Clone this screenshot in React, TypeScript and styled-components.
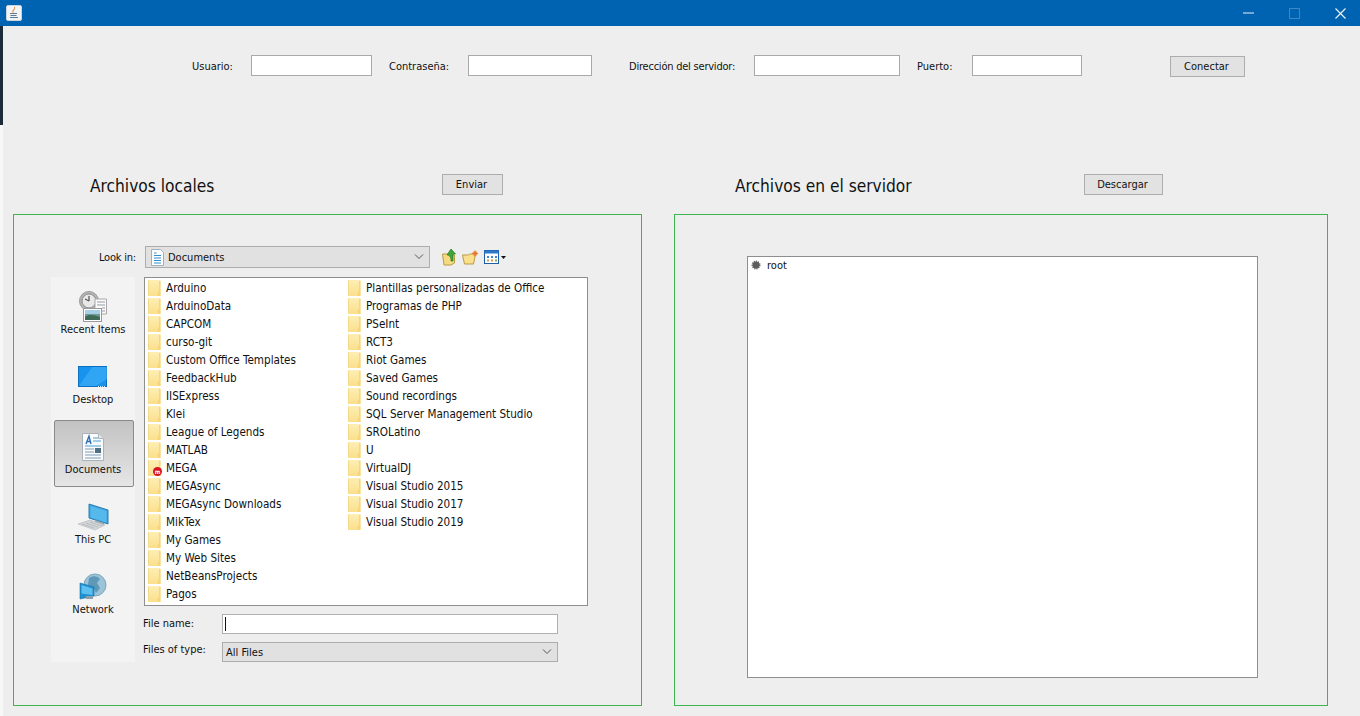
import React from "react";
import styled, { createGlobalStyle } from "styled-components";

const Global = createGlobalStyle`
  html, body { margin: 0; padding: 0; background: #eeeeee; }
  body { font-family: "DejaVu Sans", "Noto Sans", sans-serif; font-stretch: condensed; font-size: 11px; color: #111; overflow: hidden; }
  * { box-sizing: border-box; }
`;

const Window = styled.div`
  width: 1360px; height: 716px; display: flex; flex-direction: column; background: #eeeeee; overflow: hidden; position: relative;
`;
const TitleBar = styled.div`
  height: 26px; background: #0063b1; display: flex; align-items: center; padding-left: 6px; flex: none;
`;
const WindowButtons = styled.div`
  margin-left: auto; margin-right: -3px; display: flex; align-items: center;
`;
const WinBtn = styled.div`
  width: 46px; height: 26px; display: flex; align-items: center; justify-content: center;
`;
const EdgeStrip = styled.div`
  position: absolute; left: 0; top: 26px; width: 3px; height: 99px; background: #1c2a3a;
`;
const EdgeLight = styled.div`
  position: absolute; left: 0; top: 125px; width: 3px; height: 591px; background: #f7f7f7;
`;
const ConnectRow = styled.div`
  height: 148px; flex: none; display: flex; align-items: flex-start; padding: 29px 0 0 192px;
`;
const Label = styled.label<{ $w: number; $ls?: number }>`
  width: ${p => p.$w}px; flex: none; height: 21px; line-height: 23px; font-size: 11px; white-space: nowrap; letter-spacing: ${p => p.$ls ?? 0}px;
`;
const TextBox = styled.div<{ $w: number; $mr: number }>`
  width: ${p => p.$w}px; margin-right: ${p => p.$mr}px; height: 21px; flex: none; background: #fff; border: 1px solid #a9a9a9;
`;
const Btn = styled.button<{ $w: number }>`
  width: ${p => p.$w}px; height: 21px; flex: none; padding: 0 2px 1px 0; background: #e2e2e2; border: 1px solid #adadad; font: inherit; font-size: 11px; color: #111;
`;
const ConnectBtn = styled(Btn)`
  margin: 1px 0 0 0;
`;
const Heads = styled.div`
  height: 40px; flex: none; display: flex; align-items: flex-start;
`;
const Head = styled.div<{ $w: number; $pl: number }>`
  width: ${p => p.$w}px; padding-left: ${p => p.$pl}px; flex: none; display: flex; align-items: flex-start;
`;
const HeadTitle = styled.h2<{ $w: number }>`
  margin: 0; width: ${p => p.$w}px; font-weight: 400; font-size: 17.2px; line-height: 25px; color: #111; white-space: nowrap; flex: none;
`;
const Panels = styled.div`
  display: flex; padding-left: 13px; gap: 32px; flex: none;
`;
const Panel = styled.div<{ $w: number }>`
  width: ${p => p.$w}px; height: 492px; border: 1px solid #3fb54f; flex: none;
`;
const LeftPanel = styled(Panel)`
  padding: 31px 0 0 37px;
`;
const RightPanel = styled(Panel)`
  padding: 41px 0 0 72px;
`;
const LookRow = styled.div`
  display: flex; height: 22px; align-items: center;
`;
const LookLabel = styled.span`
  width: 94px; padding: 0 9px 0 0; text-align: right; font-size: 11px; letter-spacing: -.2px; white-space: nowrap; flex: none;
`;
const Combo = styled.div<{ $w: number }>`
  width: ${p => p.$w}px; height: 22px; flex: none; background: #e1e1e1; border: 1px solid #adadad; display: flex; align-items: center; padding: 0 5px 0 5px; font-size: 11px; gap: 4px;
`;
const ComboText = styled.span`
  flex: 1; white-space: nowrap; padding-top: 1px;
`;
const Tools = styled.div`
  display: flex; align-items: center; margin-left: 12px; gap: 5px;
`;
const Body = styled.div`
  display: flex; margin-top: 9px;
`;
const Sidebar = styled.div`
  width: 84px; height: 385px; flex: none; background: #f3f3f3; padding: 2px 0 0 3px; margin-right: 8px;
`;
const Place = styled.div<{ $sel?: boolean }>`
  width: 80px; height: 70px; position: relative; display: flex; flex-direction: column; align-items: center; justify-content: flex-end; padding: 0 2px 12px 0; font-size: 11px;
  ${p => p.$sel && `
    &::before { content: ""; position: absolute; left: 0; right: 0; top: 1px; bottom: 2px; border: 1px solid #8a8a8a; border-radius: 2px; background: linear-gradient(#c2c2c2, #e6e6e6); }
  `}
`;
const PlaceIcon = styled.div`
  position: relative; height: 34px; display: flex; align-items: center; justify-content: center; margin-bottom: -1px;
`;
const PlaceLabel = styled.span`
  position: relative; line-height: 14px; white-space: nowrap;
`;
const Main = styled.div`
  width: 445px; flex: none;
`;
const FileList = styled.div`
  width: 444px; height: 329px; margin-left: 1px; background: #fff; border: 1px solid #8e8e8e; padding: 1px 0 0 3px;
  display: grid; grid-template-columns: 200px 1fr; grid-template-rows: repeat(18, 18px); grid-auto-flow: column;
`;
const FileRow = styled.div`
  display: flex; align-items: center; height: 18px; font-size: 11.6px; white-space: nowrap; color: #111; gap: 5px;
`;
const FolderWrap = styled.span`
  position: relative; width: 13px; height: 18px; flex: none; display: block;
`;
const MegaBadge = styled.span`
  position: absolute; left: 5px; bottom: 1px; width: 9px; height: 9px; border-radius: 50%; background: #d9131f; color: #fff; font-size: 6px; line-height: 9px; text-align: center; font-weight: 700;
`;
const FormRow = styled.div<{ $mt: number }>`
  display: flex; align-items: flex-start; margin-top: ${p => p.$mt}px;
`;
const FormLabel = styled.span<{ $dy: number }>`
  width: 79px; flex: none; font-size: 11px; line-height: 14px; margin-top: ${p => p.$dy}px; white-space: nowrap;
`;
const NameInput = styled.div`
  width: 336px; height: 20px; background: #fff; border: 1px solid #b0b0b0; padding: 2px 0 0 2px;
`;
const Caret = styled.div`
  width: 1px; height: 14px; background: #111;
`;
const TypeCombo = styled(Combo)`
  width: 336px; height: 20px; padding-left: 3px;
`;
const Tree = styled.div`
  width: 511px; height: 422px; background: #fff; border: 1px solid #8e8e8e; padding: 0 0 0 3px; display: flex; align-items: flex-start;
`;
const TreeRow = styled.div`
  display: flex; align-items: center; height: 16px; gap: 6px; font-size: 11px;
`;

const Chevron = () => (
  <svg width="10" height="6" viewBox="0 0 10 6"><path d="M1 .5 5 4.500 9 .5" fill="none" stroke="#555" /></svg>
);
const Folder = () => (
  <svg width="13" height="18" viewBox="0 0 13 18" style={{ display: "block" }}>
    <defs>
      <linearGradient id="fg" x1="0" y1="0" x2="0" y2="1">
        <stop offset="0" stopColor="#fdeeb4" />
        <stop offset="1" stopColor="#fbe08c" />
      </linearGradient>
    </defs>
    <path d="M0 1h12.500v16H0z" fill="url(#fg)" />
    <path d="M.5 1.500v15" stroke="#f3d98c" />
    <path d="M11 2h1.500v15H9.500v-3.500L11 12z" fill="#f6d67a" />
  </svg>
);
const DocIcon = ({ big }: { big?: boolean }) => (
  big ? (
    <svg width="24" height="28" viewBox="0 0 24 28">
      <path d="M1.500.5h16l5 5v22h-21z" fill="#fbfbfb" stroke="#a9b2ba" />
      <path d="M17.500.5v5h5" fill="#e5e9ec" stroke="#a9b2ba" />
      <path d="M5 11 8 3l2 8M6 8.500h3.500" fill="none" stroke="#2c6fb6" strokeWidth="1.400" />
      <path d="M12 5h5M12 8h8M4 13h16" stroke="#48a0d8" />
      <path d="M4 16h9M4 19h9M4 22h16M4 25h16" stroke="#7d9cb8" />
      <rect x="14" y="15" width="6" height="5" fill="#4f6f84" />
    </svg>
  ) : (
    <svg width="13" height="17" viewBox="0 0 13 17">
      <path d="M.5.5h9l3 3v13H.5z" fill="#fff" stroke="#9fb0be" />
      <path d="M3 4h2.500M3 6.500h7M3 9h7M3 11.500h7M3 14h7" stroke="#2f8fd0" />
    </svg>
  )
);
const ClockIcon = () => (
  <svg width="30" height="32" viewBox="0 0 30 32">
    <circle cx="11" cy="10" r="9.500" fill="#b5b5b5" stroke="#9a9a9a" />
    <circle cx="11" cy="10" r="7" fill="#e8e8e8" stroke="#8a8a8a" />
    <path d="M11 5v5l-4-2" fill="none" stroke="#333" />
    <path d="M17 8h11.500v15H17z" fill="#fafafa" stroke="#a8a8a8" />
    <path d="M19 11h8M19 14h8M24 17h3M24 20h3" stroke="#99a" />
    <rect x="5.500" y="17.500" width="18" height="13" fill="#fff" stroke="#9a9a9a" />
    <rect x="7" y="19" width="15" height="10" fill="#6f9a92" />
    <rect x="7" y="19" width="15" height="4" fill="#a5d0e6" />
    <path d="M7 26c4-3 9-2 15 0v3H7z" fill="#3f6a55" />
  </svg>
);
const DesktopIcon = () => (
  <svg width="30" height="22" viewBox="0 0 30 22">
    <rect x=".5" y=".5" width="28" height="20" fill="#1793ee" stroke="#0e6fc0" />
    <path d="M1 20 14 1h15v12L18 20z" fill="#3fb0f7" opacity=".6" />
    <path d="M20 20.500h8" stroke="#cfe8fa" strokeDasharray="1 1" />
  </svg>
);
const PcIcon = () => (
  <svg width="32" height="28" viewBox="0 0 32 28">
    <path d="M12 1l19 6v14l-19-6z" fill="#3ba2df" stroke="#2d7fb4" />
    <path d="M13.500 3l16 5v11.500l-16-5z" fill="#56b9ec" />
    <path d="M18 17l9 3v3l-9-3z" fill="#9aa5ad" />
    <path d="M1 21 13 17l15 5-10 5z" fill="#d3d6d8" stroke="#b3b7ba" strokeWidth=".6" />
    <path d="M5 21l12 4M9 20l12 4M13 19l12 4" stroke="#a9adb0" strokeWidth=".6" />
  </svg>
);
const NetIcon = () => (
  <svg width="28" height="28" viewBox="0 0 28 28">
    <circle cx="16" cy="12" r="11" fill="#9cc4d8" stroke="#7aa6be" />
    <path d="M10 5c4-3 9-2 11 1l-3 4 3 5-4 5-3-6-5-2z" fill="#6098b8" />
    <path d="M1 11l14 4v9L1 27z" fill="#1e8fd0" stroke="#1672a8" strokeWidth=".6" transform="translate(0 -1)" />
    <path d="M2.500 12l11 3.500v6.500l-11-1.500z" fill="#5cc0ef" />
    <path d="M7 23h7v3H7z" fill="#8ea0aa" />
  </svg>
);
const UpIcon = () => (
  <svg width="15" height="18" viewBox="0 0 15 18">
    <path d="M.5 6h6l1 1h5v8L9 17H2z" fill="#f6da82" stroke="#b99b44" />
    <path d="M9 1 13.500 6H11v7H9c0-4-1-5-3-6l-1 0z" fill="#3fa73a" stroke="#23761f" strokeWidth=".7" />
  </svg>
);
const NewFolderIcon = () => (
  <svg width="17" height="15" viewBox="0 0 17 15">
    <path d="M.5 5h6l1-1h6l-2 10H2.500z" fill="#f8e08e" stroke="#b99b44" />
    <circle cx="13" cy="3.500" r="2.500" fill="#f29a4a" />
    <path d="M13 .5v6M10 3.500h6" stroke="#d9602a" strokeWidth=".7" />
  </svg>
);
const ViewIcon = () => (
  <svg width="22" height="14" viewBox="0 0 22 14">
    <rect x=".5" y=".5" width="14" height="13" fill="#fff" stroke="#1e5fa8" />
    <rect x=".5" y=".5" width="14" height="3" fill="#2b79c9" />
    <path d="M3 6h2v2H3zM7 6h2v2H7zM11 6h2v2h-2z" fill="#3c8ad0" />
    <path d="M3 9.500h2v2H3zM7 9.500h2v2H7z" fill="#d59a4a" />
    <path d="M11 9.500h2v2h-2z" fill="#7aa660" />
    <path d="M17 6h5l-2.500 3z" fill="#111" />
  </svg>
);
const JavaIcon = () => (
  <svg width="16" height="16" viewBox="0 0 16 16">
    <rect x=".5" y=".5" width="15" height="15" rx="1.500" fill="#f2f4f6" stroke="#c9d4de" />
    <path d="M8.500 2c1 2-2.500 3-1.500 5.500C6 5 9.500 4.500 8.500 2z" fill="#e07b22" stroke="#e07b22" strokeWidth=".6" />
    <path d="M4 8.500h7M4.500 10.500h6M4 12.500h8" stroke="#5f7a92" />
  </svg>
);
const RootBullet = () => (
  <svg width="10" height="10" viewBox="0 0 10 10">
    <circle cx="5" cy="5" r="3.500" fill="#5e5e5e" stroke="#5e5e5e" strokeDasharray="1 1" strokeWidth="2" />
  </svg>
);

const col1 = ["Arduino","ArduinoData","CAPCOM","curso-git","Custom Office Templates","FeedbackHub","IISExpress","Klei","League of Legends","MATLAB","MEGA","MEGAsync","MEGAsync Downloads","MikTex","My Games","My Web Sites","NetBeansProjects","Pagos"];
const col2 = ["Plantillas personalizadas de Office","Programas de PHP","PSeInt","RCT3","Riot Games","Saved Games","Sound recordings","SQL Server Management Studio","SROLatino","U","VirtualDJ","Visual Studio 2015","Visual Studio 2017","Visual Studio 2019"];

export default function App() {
  return (
    <Window>
      <Global />
      <TitleBar>
        <JavaIcon />
        <WindowButtons>
          <WinBtn>
            <svg width="11" height="2" viewBox="0 0 11 2"><path d="M0 1h11" stroke="#e8f1f8" /></svg>
          </WinBtn>
          <WinBtn>
            <svg width="11" height="11" viewBox="0 0 11 11"><rect x=".5" y=".5" width="10" height="10" fill="none" stroke="#3d87c6" /></svg>
          </WinBtn>
          <WinBtn>
            <svg width="11" height="11" viewBox="0 0 11 11"><path d="M.5.5l10 10M10.500.5l-10 10" stroke="#f2f7fb" strokeWidth="1.100" /></svg>
          </WinBtn>
        </WindowButtons>
      </TitleBar>
      <EdgeStrip />
      <EdgeLight />
      <ConnectRow>
        <Label $w={59}>Usuario:</Label>
        <TextBox $w={121} $mr={17} />
        <Label $w={79}>Contraseña:</Label>
        <TextBox $w={124} $mr={37} />
        <Label $w={125} $ls={-0.22}>Dirección del servidor:</Label>
        <TextBox $w={146} $mr={17} />
        <Label $w={55}>Puerto:</Label>
        <TextBox $w={110} $mr={88} />
        <ConnectBtn $w={75}>Conectar</ConnectBtn>
      </ConnectRow>
      <Heads>
        <Head $w={658} $pl={90}>
          <HeadTitle $w={352}>Archivos locales</HeadTitle>
          <Btn $w={61}>Enviar</Btn>
        </Head>
        <Head $w={600} $pl={77}>
          <HeadTitle $w={349}>Archivos en el servidor</HeadTitle>
          <Btn $w={79}>Descargar</Btn>
        </Head>
      </Heads>
      <Panels>
        <LeftPanel $w={629}>
          <LookRow>
            <LookLabel>Look in:</LookLabel>
            <Combo $w={285}>
              <DocIcon />
              <ComboText>Documents</ComboText>
              <Chevron />
            </Combo>
            <Tools>
              <UpIcon />
              <NewFolderIcon />
              <ViewIcon />
            </Tools>
          </LookRow>
          <Body>
            <Sidebar>
              <Place><PlaceIcon><ClockIcon /></PlaceIcon><PlaceLabel>Recent Items</PlaceLabel></Place>
              <Place><PlaceIcon><DesktopIcon /></PlaceIcon><PlaceLabel>Desktop</PlaceLabel></Place>
              <Place $sel><PlaceIcon><DocIcon big /></PlaceIcon><PlaceLabel>Documents</PlaceLabel></Place>
              <Place><PlaceIcon><PcIcon /></PlaceIcon><PlaceLabel>This PC</PlaceLabel></Place>
              <Place><PlaceIcon><NetIcon /></PlaceIcon><PlaceLabel>Network</PlaceLabel></Place>
            </Sidebar>
            <Main>
              <FileList>
                {[...col1, ...col2].map(n => (
                  <FileRow key={n}>
                    <FolderWrap>
                      <Folder />
                      {n === "MEGA" && <MegaBadge>m</MegaBadge>}
                    </FolderWrap>
                    {n}
                  </FileRow>
                ))}
              </FileList>
              <FormRow $mt={8}>
                <FormLabel $dy={3}>File name:</FormLabel>
                <NameInput><Caret /></NameInput>
              </FormRow>
              <FormRow $mt={8}>
                <FormLabel $dy={1}>Files of type:</FormLabel>
                <TypeCombo $w={336}><ComboText>All Files</ComboText><Chevron /></TypeCombo>
              </FormRow>
            </Main>
          </Body>
        </LeftPanel>
        <RightPanel $w={654}>
          <Tree>
            <TreeRow><RootBullet />root</TreeRow>
          </Tree>
        </RightPanel>
      </Panels>
    </Window>
  );
}
